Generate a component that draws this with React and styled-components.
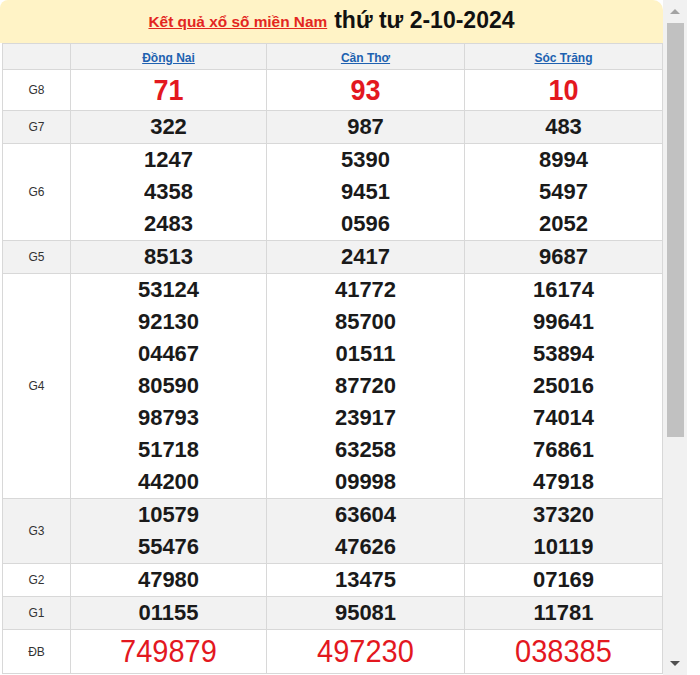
import React from "react";
import styled, { createGlobalStyle } from "styled-components";

const Global = createGlobalStyle`
  html, body { margin: 0; padding: 0; background: #fff; }
  body { font-family: "Liberation Sans", Arial, sans-serif; }
`;

const Page = styled.div`
  display: flex;
  align-items: flex-start;
  width: 700px;
  height: 675px;
  overflow: hidden;
`;

const Content = styled.div`
  width: 663px;
  display: flex;
  flex-direction: column;
`;

const Title = styled.div`
  height: 43px;
  background: #fff3c6;
  border-radius: 8px 10px 0 0;
  display: flex;
  align-items: center;
  justify-content: center;
  gap: 7px;
  padding-bottom: 2px;
  box-sizing: border-box;
`;

const TitleLink = styled.a`
  color: #e3261f;
  font-size: 15.4px;
  font-weight: bold;
  text-decoration: underline;
  margin-top: 2px;
`;

const TitleDate = styled.span`
  color: #111;
  font-size: 23px;
  font-weight: bold;
`;

const Table = styled.table`
  margin-left: 2px;
  width: 660px;
  border-collapse: collapse;
  table-layout: fixed;
`;

const Row = styled.tr`
  background: ${(p) => (p.$shade ? "#f2f2f2" : "#fff")};
`;

const Cell = styled.td`
  border: 1px solid #d8d8d8;
  text-align: center;
  vertical-align: middle;
  padding: 0;
  height: ${(p) => p.$h}px;
`;

const Label = styled(Cell)`
  font-size: 12px;
  color: #333;
`;

const City = styled.a`
  color: #2061b0;
  font-size: 12px;
  font-weight: bold;
  text-decoration: underline;
`;

const Num = styled.div`
  line-height: 32px;
  font-size: 22px;
  font-weight: bold;
  color: #1a1a1a;
  transform: scaleY(1.04);
`;

const BigNum = styled.div`
  font-size: ${(p) => p.$size}px;
  font-weight: ${(p) => p.$weight};
  color: #e3181f;
  line-height: 1;
  transform: scaleY(1.06);
`;

const Scroll = styled.div`
  width: 24px;
  height: 675px;
  background: #f1f1f1;
  display: flex;
  flex-direction: column;
  align-items: center;
`;

const Arrow = styled.div`
  height: 23px;
  display: flex;
  align-items: center;
  justify-content: center;
  &::after {
    content: "";
    width: 0;
    height: 0;
    border-left: 5px solid transparent;
    border-right: 5px solid transparent;
    ${(p) =>
      p.$down
        ? `border-top: 5px solid #505050;`
        : `border-bottom: 5px solid #a3a3a3;`}
  }
`;

const Thumb = styled.div`
  width: 17px;
  height: 414px;
  background: #c1c1c1;
`;

const Spacer = styled.div`
  flex: 1;
`;

const prizes = [
  { label: "G8", big: true, size: 27, weight: "bold", h: 40, vals: [["71"], ["93"], ["10"]] },
  { label: "G7", h: 32, vals: [["322"], ["987"], ["483"]] },
  { label: "G6", vals: [["1247", "4358", "2483"], ["5390", "9451", "0596"], ["8994", "5497", "2052"]] },
  { label: "G5", h: 31, vals: [["8513"], ["2417"], ["9687"]] },
  {
    label: "G4",
    vals: [
      ["53124", "92130", "04467", "80590", "98793", "51718", "44200"],
      ["41772", "85700", "01511", "87720", "23917", "63258", "09998"],
      ["16174", "99641", "53894", "25016", "74014", "76861", "47918"],
    ],
  },
  { label: "G3", vals: [["10579", "55476"], ["63604", "47626"], ["37320", "10119"]] },
  { label: "G2", h: 32, vals: [["47980"], ["13475"], ["07169"]] },
  { label: "G1", h: 32, vals: [["01155"], ["95081"], ["11781"]] },
  { label: "ĐB", big: true, size: 29, weight: "normal", h: 43, vals: [["749879"], ["497230"], ["038385"]] },
];

const cities = ["Đồng Nai", "Cần Thơ", "Sóc Trăng"];

export default function App() {
  return (
    <Page>
      <Global />
      <Content>
        <Title>
          <TitleLink href="#">Kết quả xổ số miền Nam</TitleLink>
          <TitleDate>thứ tư 2-10-2024</TitleDate>
        </Title>
        <Table>
          <colgroup>
            <col style={{ width: 68 }} />
            <col style={{ width: 196 }} />
            <col style={{ width: 198 }} />
            <col style={{ width: 198 }} />
          </colgroup>
          <tbody>
            <Row $shade>
              <Label $h={25}></Label>
              {cities.map((c) => (
                <Cell key={c} $h={25}>
                  <City href="#">{c}</City>
                </Cell>
              ))}
            </Row>
            {prizes.map((p, i) => (
              <Row key={p.label} $shade={i % 2 === 1}>
                <Label $h={p.h}>{p.label}</Label>
                {p.vals.map((col, j) => (
                  <Cell key={j} $h={p.h}>
                    {p.big
                      ? col.map((v) => (
                          <BigNum key={v} $size={p.size} $weight={p.weight}>
                            {v}
                          </BigNum>
                        ))
                      : col.map((v) => <Num key={v}>{v}</Num>)}
                  </Cell>
                ))}
              </Row>
            ))}
          </tbody>
        </Table>
      </Content>
      <Scroll>
        <Arrow />
        <Thumb />
        <Spacer />
        <Arrow $down />
      </Scroll>
    </Page>
  );
}
